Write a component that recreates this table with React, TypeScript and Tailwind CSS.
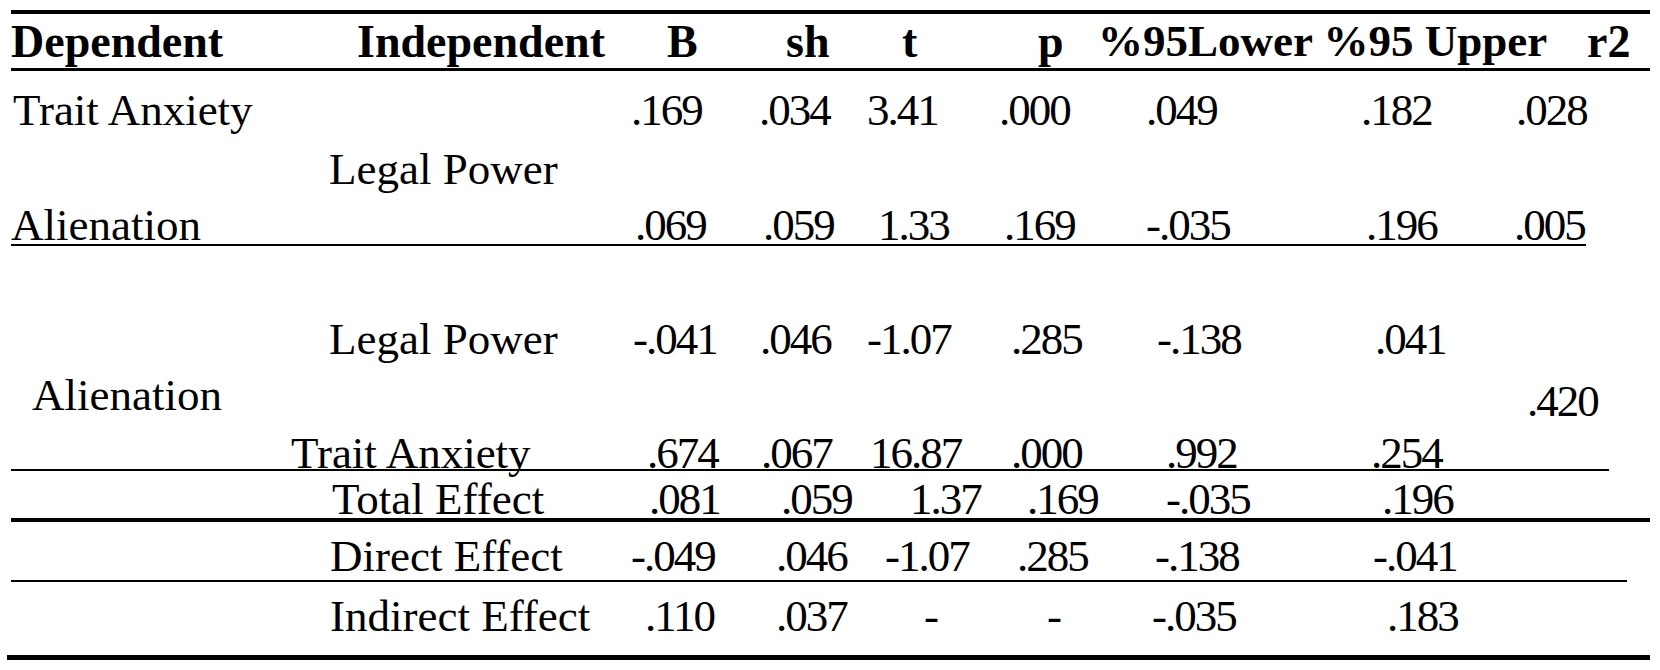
export default function App() {
  const num = "tracking-[-2px]";
  return (
    <div className="w-[1660px] h-[670px] bg-white text-black font-['Liberation_Serif','Times_New_Roman',serif] text-[45px] pt-[10px]">
      {/* top rule */}
      <div className="ml-[11px] w-[1639px] h-[4px] bg-black" />

      {/* header */}
      <div className="grid grid-cols-[346px_310px_119px_116px_136px_60px_489px_1fr] pl-[11px] pt-[1px] h-[54px] leading-[53px] font-bold text-[46px] whitespace-nowrap">
        <div>Dependent</div>
        <div>Independent</div>
        <div>B</div>
        <div>sh</div>
        <div>t</div>
        <div>p</div>
        <div className="text-[45px]">%95Lower %95 Upper</div>
        <div>r2</div>
      </div>
      <div className="ml-[11px] w-[1639px] h-[3px] bg-black" />

      {/* Trait Anxiety / Alienation on Legal Power */}
      <div className="grid grid-cols-[618px_128px_108px_132px_147px_215px_155px_1fr] pl-[13px] pt-[8px] h-[70px] leading-[62px] whitespace-nowrap">
        <div>Trait Anxiety</div>
        <div className={num}>.169</div>
        <div className={num}>.034</div>
        <div className={num}>3.41</div>
        <div className={num}>.000</div>
        <div className={num}>.049</div>
        <div className={num}>.182</div>
        <div className={num}>.028</div>
      </div>
      <div className="pl-[329px] h-[56px] leading-[56px]">Legal Power</div>
      <div className="grid grid-cols-[624px_128px_115px_126px_142px_220px_148px_1fr] pl-[11px] pt-[10px] h-[47px] leading-[37px] whitespace-nowrap">
        <div>Alienation</div>
        <div className={num}>.069</div>
        <div className={num}>.059</div>
        <div className={num}>1.33</div>
        <div className={num}>.169</div>
        <div className={num}>-.035</div>
        <div className={num}>.196</div>
        <div className={num}>.005</div>
      </div>
      <div className="ml-[11px] w-[1575px] h-[2px] bg-black" />

      {/* Alienation on Legal Power + Trait Anxiety */}
      <div className="h-[65px]" />
      <div className="grid grid-cols-[304px_127px_107px_144px_146px_218px_1fr] pl-[329px] h-[56px] leading-[56px] whitespace-nowrap">
        <div>Legal Power</div>
        <div className={num}>-.041</div>
        <div className={num}>.046</div>
        <div className={num}>-1.07</div>
        <div className={num}>.285</div>
        <div className={num}>-.138</div>
        <div className={num}>.041</div>
      </div>
      <div className="grid grid-cols-[1495px_1fr] pl-[32px] h-[56px] leading-[56px] whitespace-nowrap">
        <div>Alienation</div>
        <div className={`${num} pt-[6px]`}>.420</div>
      </div>
      <div className="grid grid-cols-[356px_114px_109px_141px_155px_205px_1fr] pl-[291px] pt-[14px] h-[46px] leading-[32px] whitespace-nowrap">
        <div>Trait Anxiety</div>
        <div className={num}>.674</div>
        <div className={num}>.067</div>
        <div className={num}>16.87</div>
        <div className={num}>.000</div>
        <div className={num}>.992</div>
        <div className={num}>.254</div>
      </div>
      <div className="ml-[11px] w-[1598px] h-[2px] bg-black" />

      {/* effects */}
      <div className="grid grid-cols-[317px_132px_129px_117px_139px_216px_1fr] pl-[332px] pt-[9px] h-[47px] leading-[38px] whitespace-nowrap">
        <div>Total Effect</div>
        <div className={num}>.081</div>
        <div className={num}>.059</div>
        <div className={num}>1.37</div>
        <div className={num}>.169</div>
        <div className={num}>-.035</div>
        <div className={num}>.196</div>
      </div>
      <div className="ml-[11px] w-[1639px] h-[4px] bg-black" />
      <div className="grid grid-cols-[301px_145px_109px_132px_138px_218px_1fr] pl-[330px] pt-[11px] h-[58px] leading-[47px] whitespace-nowrap">
        <div>Direct Effect</div>
        <div className={num}>-.049</div>
        <div className={num}>.046</div>
        <div className={num}>-1.07</div>
        <div className={num}>.285</div>
        <div className={num}>-.138</div>
        <div className={num}>-.041</div>
      </div>
      <div className="ml-[11px] w-[1616px] h-[2px] bg-black" />
      <div className="grid grid-cols-[315px_131px_148px_123px_105px_235px_1fr] pl-[330px] h-[73px] leading-[68px] whitespace-nowrap">
        <div>Indirect Effect</div>
        <div className={num}>.110</div>
        <div className={num}>.037</div>
        <div>-</div>
        <div>-</div>
        <div className={num}>-.035</div>
        <div className={num}>.183</div>
      </div>
      <div className="ml-[7px] w-[1643px] h-[5px] bg-black" />
    </div>
  );
}
